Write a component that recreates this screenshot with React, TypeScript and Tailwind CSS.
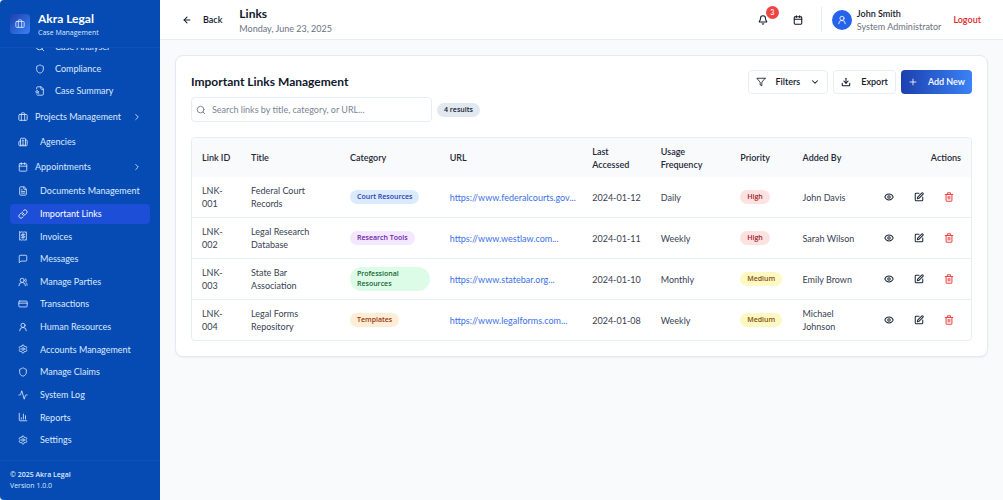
import type { ReactNode } from "react";
import {
  Activity,
  ArrowLeft,
  Bell,
  Briefcase,
  Building2,
  Calendar,
  ChartColumn,
  ChevronDown,
  ChevronRight,
  CreditCard,
  Download,
  Eye,
  FileText,
  Link as LinkIcon,
  Plus,
  Search,
  Settings,
  Shield,
  SquarePen,
  Trash2,
  UserRound,
  UsersRound,
} from "lucide-react";

interface IconProps {
  className?: string;
}

function Svg({ className, children }: IconProps & { children: ReactNode }) {
  return (
    <svg
      viewBox="0 0 24 24"
      fill="none"
      stroke="currentColor"
      strokeWidth="2"
      strokeLinecap="round"
      strokeLinejoin="round"
      className={className}
      aria-hidden="true"
    >
      {children}
    </svg>
  );
}

function FileSearchIcon({ className }: IconProps) {
  return (
    <Svg className={className}>
      <path d="M14 2v4a2 2 0 0 0 2 2h4" />
      <path d="M4.268 21a2 2 0 0 0 1.727 1H18a2 2 0 0 0 2-2V7l-5-5H6a2 2 0 0 0-2 2v3" />
      <path d="m9 18-1.5-1.5" />
      <circle cx="5" cy="14" r="3" />
    </Svg>
  );
}

function InvoiceIcon({ className }: IconProps) {
  return (
    <Svg className={className}>
      <path d="M4 2v20l2-1 2 1 2-1 2 1 2-1 2 1 2-1 2 1V2l-2 1-2-1-2 1-2-1-2 1-2-1-2 1Z" />
      <path d="M16 8h-6a2 2 0 1 0 0 4h4a2 2 0 1 1 0 4H8" />
      <path d="M12 17.5v-11" />
    </Svg>
  );
}

function MessageIcon({ className }: IconProps) {
  return (
    <Svg className={className}>
      <path d="M21 15a2 2 0 0 1-2 2H7l-4 4V5a2 2 0 0 1 2-2h14a2 2 0 0 1 2 2z" />
    </Svg>
  );
}

function FilterIcon({ className }: IconProps) {
  return (
    <Svg className={className}>
      <polygon points="22 3 2 3 10 12.46 10 19 14 21 14 12.46 22 3" />
    </Svg>
  );
}

const subItems = [
  { label: "Case Analyser", icon: Search },
  { label: "Compliance", icon: Shield },
  { label: "Case Summary", icon: FileSearchIcon },
];

const groupItems = [
  { label: "Projects Management", icon: Briefcase, expandable: true },
  { label: "Agencies", icon: Building2, expandable: false },
  { label: "Appointments", icon: Calendar, expandable: true },
];

const navItems = [
  { label: "Documents Management", icon: FileText },
  { label: "Important Links", icon: LinkIcon, active: true },
  { label: "Invoices", icon: InvoiceIcon },
  { label: "Messages", icon: MessageIcon },
  { label: "Manage Parties", icon: UsersRound },
  { label: "Transactions", icon: CreditCard },
  { label: "Human Resources", icon: UserRound },
  { label: "Accounts Management", icon: Settings },
  { label: "Manage Claims", icon: Shield },
  { label: "System Log", icon: Activity },
  { label: "Reports", icon: ChartColumn },
  { label: "Settings", icon: Settings },
];

interface LegalLink {
  id: string;
  title: string;
  category: string;
  url: string;
  accessed: string;
  usage: string;
  priority: "High" | "Medium";
  addedBy: string;
}

const links: LegalLink[] = [
  {
    id: "LNK-001",
    title: "Federal Court Records",
    category: "Court Resources",
    url: "https://www.federalcourts.gov",
    accessed: "2024-01-12",
    usage: "Daily",
    priority: "High",
    addedBy: "John Davis",
  },
  {
    id: "LNK-002",
    title: "Legal Research Database",
    category: "Research Tools",
    url: "https://www.westlaw.com",
    accessed: "2024-01-11",
    usage: "Weekly",
    priority: "High",
    addedBy: "Sarah Wilson",
  },
  {
    id: "LNK-003",
    title: "State Bar Association",
    category: "Professional Resources",
    url: "https://www.statebar.org",
    accessed: "2024-01-10",
    usage: "Monthly",
    priority: "Medium",
    addedBy: "Emily Brown",
  },
  {
    id: "LNK-004",
    title: "Legal Forms Repository",
    category: "Templates",
    url: "https://www.legalforms.com",
    accessed: "2024-01-08",
    usage: "Weekly",
    priority: "Medium",
    addedBy: "Michael Johnson",
  },
];

const badgeColors: Record<string, string> = {
  "Court Resources": "bg-[#dbeafe] text-[#1e40af]",
  "Research Tools": "bg-[#f3e8ff] text-[#6b21a8]",
  "Professional Resources": "bg-[#dcfce7] text-[#166534]",
  Templates: "bg-[#ffedd5] text-[#9a3412]",
  High: "bg-[#fee2e2] text-[#991b1b]",
  Medium: "bg-[#fef9c3] text-[#854d0e]",
};

function Badge({ label }: { label: string }) {
  return (
    <span
      className={`inline-block rounded-full px-[7px] py-[2px] align-middle font-['Open_Sans',sans-serif] text-[7px] leading-[10px] font-semibold ${badgeColors[label] ?? "bg-[#e2e8f0] text-[#0f172a]"}`}
    >
      {label}
    </span>
  );
}

function Sidebar() {
  return (
    <aside className="flex h-screen w-40 shrink-0 flex-col rounded-l bg-[#064ab3] text-[#dbeafe]">
      <div className="flex h-12 shrink-0 items-center gap-2 border-b border-[#1050b8] px-[10px]">
        <div className="flex size-5 items-center justify-center rounded bg-linear-to-br from-[#1e40af] to-[#3b82f6]">
          <Briefcase className="size-[10px]" />
        </div>
        <div className="pt-[2px]">
          <div className="text-[12px] leading-[15px] font-bold text-white">Akra Legal</div>
          <div className="font-['Open_Sans',sans-serif] text-[7px] leading-[13px]">Case Management</div>
        </div>
      </div>

      <nav className="flex min-h-0 flex-1 flex-col gap-[2px] overflow-hidden px-[10px] pb-[10px] text-[9px]">
        {/* list is scrolled, first row sits partly under the logo bar */}
        <ul className="-mt-3 shrink-0">
          {subItems.map(({ label, icon: Icon }) => (
            <li key={label}>
              <a href="#" className="flex h-[22px] items-center gap-[10px] pl-[25px]">
                <Icon className="size-[10px]" />
                {label}
              </a>
            </li>
          ))}
        </ul>
        <ul className="shrink-0">
          {groupItems.map(({ label, icon: Icon, expandable }) => (
            <li key={label}>
              {expandable ? (
                <button className="flex h-[25px] w-full items-center gap-[7px] pr-2 pl-2 whitespace-nowrap">
                  <Icon className="size-[10px] shrink-0" />
                  {label}
                  <ChevronRight className="ml-auto size-[10px] shrink-0" />
                </button>
              ) : (
                <a href="#" className="flex h-[25px] items-center gap-3 pl-2">
                  <Icon className="size-[10px]" />
                  {label}
                </a>
              )}
            </li>
          ))}
        </ul>
        <ul className="flex flex-1 flex-col justify-between">
          {navItems.map(({ label, icon: Icon, active }) => (
            <li key={label}>
              <a
                href="#"
                className={`flex h-5 items-center gap-3 rounded pl-2 whitespace-nowrap ${active ? "bg-[#1d4ed8] text-white" : ""}`}
              >
                <Icon className="size-[10px] shrink-0" />
                {label}
              </a>
            </li>
          ))}
        </ul>
      </nav>

      <div className="shrink-0 border-t border-[#1050b8] px-[10px] pt-2 pb-[9px] font-['Open_Sans',sans-serif] text-[7px] leading-[11px]">
        <div className="font-semibold">© 2025 Akra Legal</div>
        <div>Version 1.0.0</div>
      </div>
    </aside>
  );
}

function Header() {
  return (
    <header className="flex h-10 items-center border-b border-[#e8edf3] bg-white px-[22px] text-[9px]">
      <button className="flex items-center gap-[11px] font-semibold">
        <ArrowLeft className="size-[10px]" strokeWidth={2.5} />
        Back
      </button>
      <div className="ml-[17px] pt-[2px]">
        <h1 className="text-[12px] leading-[16px] font-bold">Links</h1>
        <p className="leading-[13px] text-[#6b7280]">Monday, June 23, 2025</p>
      </div>

      <div className="ml-auto flex items-center">
        <button className="relative p-[5px]" aria-label="Notifications">
          <Bell className="size-[10px]" strokeWidth={2.5} />
          <span className="absolute -top-[4px] -right-[6px] flex size-[13px] items-center justify-center rounded-full bg-[#ef4444] text-[7px] font-semibold text-white">
            3
          </span>
        </button>
        <button className="ml-[15px] p-[5px]" aria-label="Calendar">
          <Calendar className="size-[10px]" strokeWidth={2.5} />
        </button>
        <div className="ml-[13px] h-[25px] border-l border-[#e5e9f0]" />
        <div className="ml-[10px] flex size-5 items-center justify-center rounded-full bg-[#2563eb] text-white">
          <UserRound className="size-[10px]" />
        </div>
        <div className="ml-[5px] leading-[13px]">
          <div className="font-semibold">John Smith</div>
          <div className="text-[#6b7280]">System Administrator</div>
        </div>
        <button className="ml-3 font-semibold text-[#dc2626]">Logout</button>
      </div>
    </header>
  );
}

function RowActions({ id }: { id: string }) {
  return (
    <div className="flex justify-end">
      <button className="flex w-[30px] shrink-0 justify-center" aria-label={`View ${id}`}>
        <Eye className="size-[10px]" strokeWidth={2.5} />
      </button>
      <button className="flex w-[30px] shrink-0 justify-center" aria-label={`Edit ${id}`}>
        <SquarePen className="size-[10px]" strokeWidth={2.5} />
      </button>
      <button className="flex w-[30px] shrink-0 justify-center text-[#ef4444]" aria-label={`Delete ${id}`}>
        <Trash2 className="size-[10px]" strokeWidth={2.5} />
      </button>
    </div>
  );
}

function LinksTable() {
  return (
    <div className="mt-[15px] overflow-hidden rounded border border-[#e8edf3]">
      <table className="w-full table-fixed text-left text-[9px] leading-[13px]">
        <thead className="bg-[#f8fafc] text-[#1f2937]">
          <tr className="h-[39px] [&>th]:px-[10px] [&>th]:font-semibold">
            <th className="w-[6.3%] whitespace-nowrap">Link ID</th>
            <th className="w-[12.7%]">Title</th>
            <th className="w-[12.8%]">Category</th>
            <th className="w-[18.3%]">URL</th>
            <th className="w-[8.8%]">Last Accessed</th>
            <th className="w-[10.2%]">Usage Frequency</th>
            <th className="w-[8%]">Priority</th>
            <th className="w-[10%]">Added By</th>
            <th className="text-right">Actions</th>
          </tr>
        </thead>
        <tbody className="text-[#374151]">
          {links.map((l) => (
            <tr
              key={l.id}
              className="border-b border-[#e8edf3] last:border-b-0 [&>td]:py-[7px] [&>td]:pl-[10px]"
            >
              <td className="pr-[10px]">{l.id}</td>
              <td className="pr-[10px]">{l.title}</td>
              <td className="pr-[10px]">
                <Badge label={l.category} />
              </td>
              <td className="whitespace-nowrap">
                <a href={l.url} className="text-[#3b6fe8]">
                  {l.url}...
                </a>
              </td>
              <td className="whitespace-nowrap">{l.accessed}</td>
              <td>{l.usage}</td>
              <td>
                <Badge label={l.priority} />
              </td>
              <td className="pr-[10px]">{l.addedBy}</td>
              <td className="pr-[7px] text-[#1f2937]">
                <RowActions id={l.id} />
              </td>
            </tr>
          ))}
        </tbody>
      </table>
    </div>
  );
}

export default function App() {
  return (
    <div className="flex min-h-screen bg-[#f8fafc] font-['Lato','Open_Sans',sans-serif] text-[#0f172a]">
      <Sidebar />
      <div className="min-w-0 flex-1">
        <Header />
        <main className="p-[15px]">
          <section className="rounded-lg border border-[#e5eaf1] bg-white p-[15px] pt-[14px] shadow-xs">
            <div className="flex items-center justify-between">
              <h2 className="text-[12px] font-bold">Important Links Management</h2>
              <div className="flex gap-[5px] text-[9px] font-semibold">
                <button className="flex h-6 items-center rounded border border-[#e8edf3] px-[7px]">
                  <FilterIcon className="size-[10px]" />
                  <span className="mr-[10px] ml-[10px]">Filters</span>
                  <ChevronDown className="size-[10px]" strokeWidth={2.5} />
                </button>
                <button className="flex h-6 items-center gap-[10px] rounded border border-[#e8edf3] px-[7px]">
                  <Download className="size-[10px]" strokeWidth={2.5} />
                  Export
                </button>
                <button className="flex h-6 items-center gap-[10px] rounded bg-linear-to-r from-[#1e40af] to-[#3b82f6] px-[7px] text-white">
                  <Plus className="size-[10px]" />
                  Add New
                </button>
              </div>
            </div>

            <div className="mt-[3px] flex items-center gap-[5px]">
              <label className="flex h-[25px] w-[241px] items-center gap-[6px] rounded border border-[#e8edf3] px-1">
                <Search className="size-[10px] shrink-0 text-[#6b7280]" />
                <input
                  type="text"
                  aria-label="Search links"
                  placeholder="Search links by title, category, or URL..."
                  className="w-full text-[9px] outline-none placeholder:text-[#7b8494]"
                />
              </label>
              <Badge label="4 results" />
            </div>

            <LinksTable />
          </section>
        </main>
      </div>
    </div>
  );
}
